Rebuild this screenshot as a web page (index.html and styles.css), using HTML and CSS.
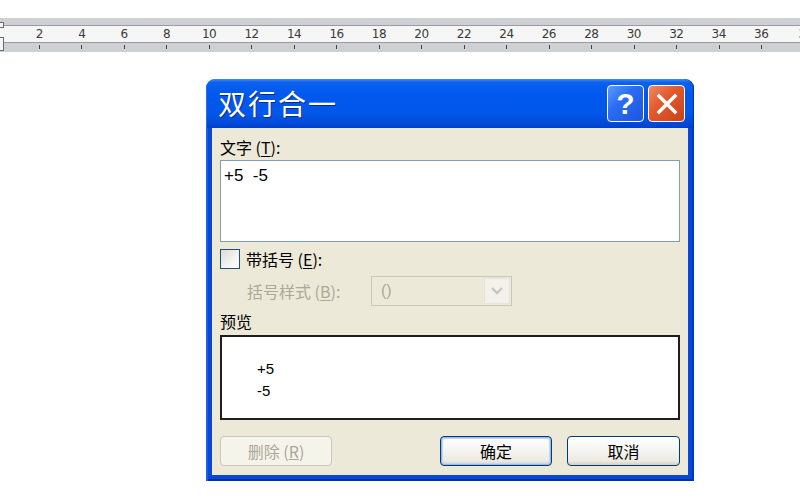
FILE: index.html
```html
<!DOCTYPE html>
<html lang="zh">
<head>
<meta charset="utf-8">
<title>双行合一</title>
<link rel="stylesheet" href="styles.css">
</head>
<body>
<div class="ruler">
  <div class="mark mark-top"></div>
  <div class="mark mark-bot"></div>
  <div class="r-top"></div>
  <div class="r-mid">
    <span>2</span><span>4</span><span>6</span><span>8</span><span>10</span><span>12</span><span>14</span><span>16</span><span>18</span><span>20</span><span>22</span><span>24</span><span>26</span><span>28</span><span>30</span><span>32</span><span>34</span><span>36</span><span class="edge">3</span>
  </div>
  <div class="r-bot">
    <span></span><span></span><span></span><span></span><span></span><span></span><span></span><span></span><span></span><span></span><span></span><span></span><span></span><span></span><span></span><span></span><span></span><span></span><span></span>
  </div>
</div>

<div class="dialog">
  <div class="titlebar">
    <span class="title">双行合一</span>
    <div class="tb-btns">
      <div class="tb help">?</div>
      <div class="tb close">
        <svg width="22" height="22" viewBox="0 0 22 22"><path d="M3 3 L19 19 M19 3 L3 19" stroke="#fff" stroke-width="3.4" stroke-linecap="square" fill="none"/></svg>
      </div>
    </div>
  </div>
  <div class="frame">
    <div class="client">
      <div class="lbl">文字 (<u>T</u>):</div>
      <div class="textbox">+5&nbsp;&nbsp;-5</div>
      <div class="check-row">
        <span class="checkbox"></span>
        <span class="lbl">带括号 (<u>E</u>):</span>
      </div>
      <div class="bracket-row">
        <span class="lbl disabled">括号样式 (<u>B</u>):</span>
        <div class="combo">
          <span class="combo-val">()</span>
          <span class="combo-btn">
            <svg width="14" height="10" viewBox="0 0 14 10"><path d="M2 2 L7 7 L12 2" stroke="#c8c6bc" stroke-width="2.4" fill="none"/></svg>
          </span>
        </div>
      </div>
      <div class="lbl preview-lbl">预览</div>
      <div class="preview">
        <div>+5</div>
        <div>-5</div>
      </div>
      <div class="btn-row">
        <div class="btn btn-disabled">删除 (<u>R</u>)</div>
        <div class="btn-right">
          <div class="btn btn-default">确定</div>
          <div class="btn">取消</div>
        </div>
      </div>
    </div>
  </div>
</div>
</body>
</html>
```
FILE: styles.css
```css
html, body {
  margin: 0;
  padding: 0;
  background: #ffffff;
  width: 800px;
  height: 502px;
  overflow: hidden;
  font-family: "Noto Sans CJK SC", "Liberation Sans", sans-serif;
}

/* ---------- ruler ---------- */
.ruler {
  position: relative;
  margin-top: 18px;
  width: 800px;
  overflow: hidden;
}
.r-top {
  height: 7px;
  background: #cfd0d3;
  border-bottom: 1px solid #9a9b9e;
}
.r-mid {
  height: 16px;
  background: #f6f6f6;
  border-bottom: 1px solid #9a9b9e;
  display: flex;
  padding-left: 18px;
  white-space: nowrap;
}
.r-mid span {
  flex: 0 0 42.47px;
  text-align: center;
  font-family: "DejaVu Sans", sans-serif;
  font-size: 12px;
  line-height: 16px;
  color: #3a3a3a;
  letter-spacing: -0.5px;
}
.r-mid span.edge {
  text-align: left;
  padding-left: 16px;
  box-sizing: border-box;
}
.r-bot {
  height: 9px;
  background: #cfd0d3;
  display: flex;
  padding-left: 18px;
}
.r-bot span {
  flex: 0 0 42.47px;
  position: relative;
}
.r-bot span::after {
  content: "";
  position: absolute;
  left: 21px;
  top: 2px;
  width: 1px;
  height: 4px;
  background: #444;
}
.mark {
  position: absolute;
  left: -2px;
  width: 4px;
  border: 1px solid #6b6b6b;
  background: #f4f4f4;
}
.mark-top { top: 4px; height: 4px; }
.mark-bot { top: 19px; height: 12px; }

/* ---------- dialog ---------- */
.dialog {
  margin: 27px 0 0 206px;
  width: 488px;
}
.titlebar {
  height: 49px;
  box-sizing: border-box;
  border-radius: 9px 9px 0 0;
  background: linear-gradient(180deg, #3b8cf5 0%, #0a62ee 7%, #0058ee 30%, #0257ea 70%, #0049d6 92%, #003fc8 100%);
  display: flex;
  align-items: center;
  justify-content: space-between;
  padding: 0 9px 2px 12px;
  box-shadow: inset 1px 0 0 #2a6ff0, inset -1px 0 0 #0030b0;
}
.title {
  color: #ffffff;
  font-size: 28px;
  font-weight: 400;
  letter-spacing: 2px;
  text-shadow: 1px 1px 0 #0b2b8a;
  line-height: 32px;
}
.tb-btns {
  display: flex;
  gap: 4px;
  margin-top: 2px;
}
.tb {
  width: 35px;
  height: 35px;
  border: 1px solid #ffffff;
  border-radius: 4px;
  display: flex;
  align-items: center;
  justify-content: center;
  box-sizing: content-box;
}
.help {
  background: linear-gradient(135deg, #5c9cff 0%, #2a6cf2 40%, #1c55e0 100%);
  color: #ffffff;
  font-family: "Liberation Sans", sans-serif;
  font-weight: bold;
  font-size: 30px;
  line-height: 35px;
}
.close {
  background: linear-gradient(135deg, #f08a66 0%, #e35a2e 40%, #c8421a 100%);
}

.frame {
  background: #0847d8;
  padding: 0 6px 6px;
  box-shadow: inset 2px 0 0 #1b5de6, inset -2px 0 0 #0036b8, inset 0 -2px 0 #0030a8;
}
.client {
  background: #ece9d8;
  height: 347px;
  box-sizing: border-box;
  padding: 9px 8px 0;
  display: flex;
  flex-direction: column;
}
.lbl {
  font-size: 16px;
  line-height: 20px;
  color: #000;
}
.lbl u { text-underline-offset: 2px; }
.disabled { color: #aca899; }

.textbox {
  margin-top: 3px;
  height: 82px;
  box-sizing: border-box;
  border: 1px solid #7f9db9;
  background: #fff;
  padding: 5px 3px;
  font-family: "Liberation Sans", sans-serif;
  font-size: 17px;
  line-height: 20px;
  color: #000;
}

.check-row {
  margin-top: 7px;
  height: 20px;
  display: flex;
  align-items: center;
}
.checkbox {
  width: 18px;
  height: 18px;
  border: 1px solid #1c5180;
  background: linear-gradient(135deg, #dcdcd6 0%, #f4f4f0 60%, #ffffff 100%);
  margin-right: 6px;
}

.bracket-row {
  margin-top: 7px;
  height: 30px;
  display: flex;
  align-items: center;
  padding-left: 27px;
}
.bracket-row .lbl { width: 124px; }
.combo {
  width: 141px;
  height: 30px;
  box-sizing: border-box;
  border: 1px solid #c9c7ba;
  background: #ece9d8;
  display: flex;
  align-items: center;
  justify-content: space-between;
  padding: 1px;
}
.combo-val {
  font-family: "Liberation Sans", sans-serif;
  font-size: 16px;
  color: #aca899;
  padding-left: 8px;
}
.combo-btn {
  width: 26px;
  height: 26px;
  background: #f2f1ea;
  border: 1px solid #e6e4da;
  box-sizing: border-box;
  display: flex;
  align-items: center;
  justify-content: center;
}

.preview-lbl { margin-top: 5px; }
.preview {
  margin-top: 4px;
  height: 85px;
  box-sizing: border-box;
  border: 2px solid #1e1e1e;
  background: #fff;
  padding: 21px 0 0 35px;
  font-family: "Liberation Sans", sans-serif;
  font-size: 15px;
  line-height: 22px;
  color: #000;
}

.btn-row {
  margin-top: 16px;
  display: flex;
  justify-content: space-between;
}
.btn-right {
  display: flex;
  gap: 15px;
}
.btn {
  width: 113px;
  height: 30px;
  box-sizing: border-box;
  border: 1px solid #003c74;
  border-radius: 4px;
  background: linear-gradient(180deg, #ffffff 0%, #f6f6f3 40%, #eceae2 85%, #d6d0c5 100%);
  display: flex;
  align-items: center;
  justify-content: center;
  font-size: 16px;
  color: #000;
}
.btn-default {
  width: 112px;
  box-shadow: inset 0 0 0 1px #9ab8ee, inset 0 0 0 2px #c4d6f6;
}
.btn-disabled {
  width: 112px;
  border-color: #c9c7ba;
  background: #f5f4ea;
  color: #aca899;
}
```
